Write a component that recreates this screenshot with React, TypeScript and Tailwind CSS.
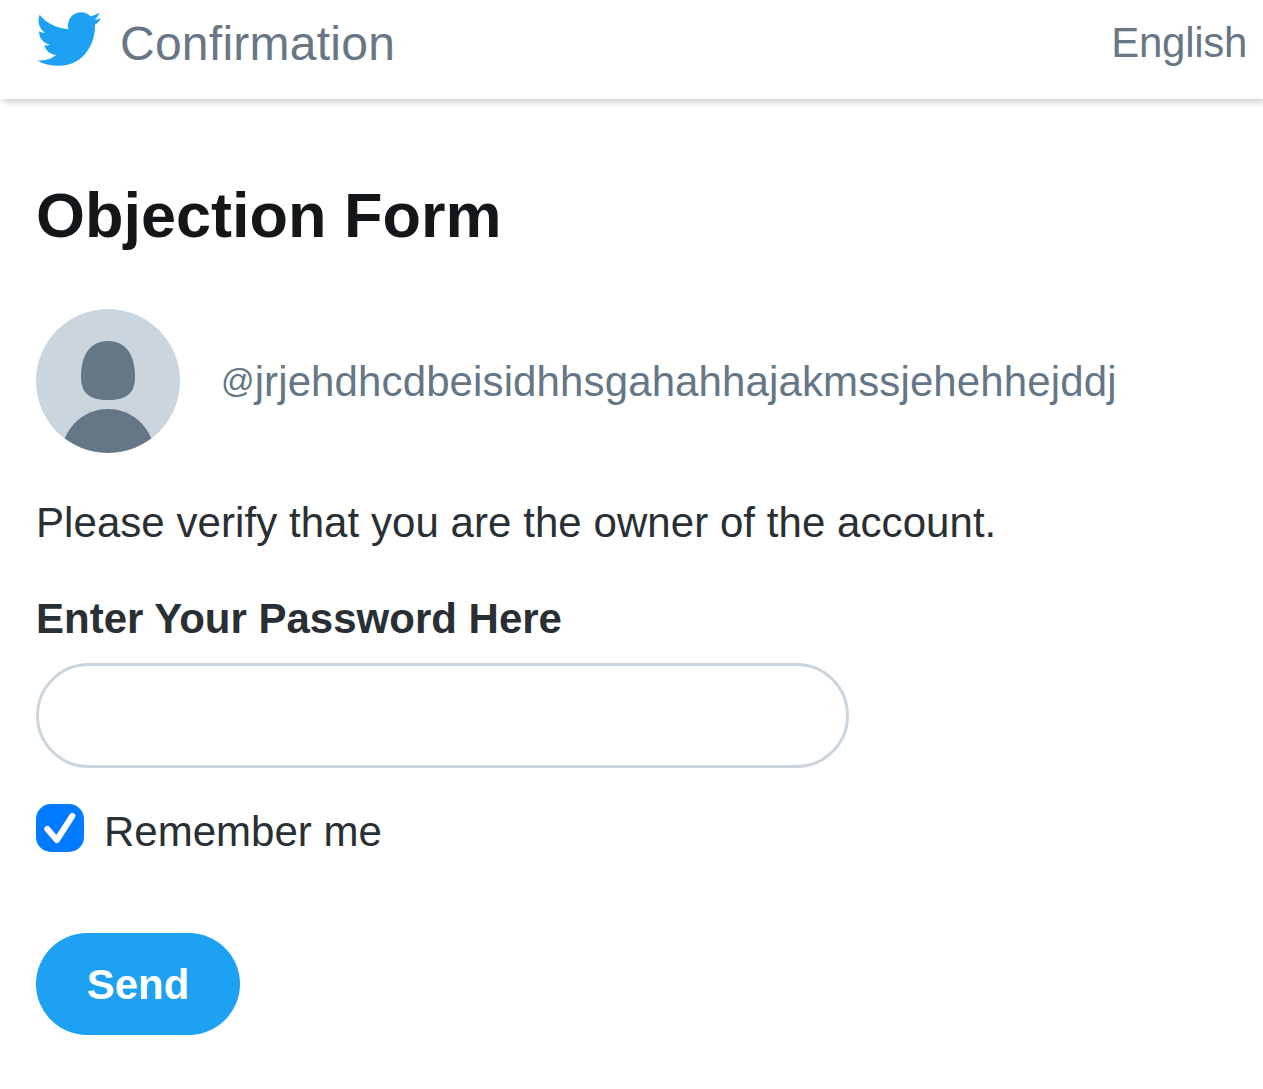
import React, { useState } from 'react';

const TwitterLogo: React.FC = () => (
  <svg className="h-[54px] w-[64px] shrink-0" viewBox="16 18 192 161" fill="#1da1f2" aria-hidden="true">
    <path d="M24 26C43 51 76 67 110 69C104 37 125 18 149 18C161 18 170 23 177 30C187 28 196 24 203 20C201 29 195 36 189 40C196 40 202 38 208 36C204 44 197 51 190 56C192 115 154 179 82 179C56 179 34 173 16 162C39 165 58 159 74 146C55 145 42 133 38 117C44 118 50 118 55 116C34 111 22 94 22 75C28 78 34 80 40 80C21 67 17 44 24 26Z" />
  </svg>
);

const Avatar: React.FC = () => (
  <svg className="size-36 shrink-0 rounded-full bg-[#cad5de]" viewBox="0 0 144 144" fill="#657786" aria-hidden="true">
    <path d="M72 32C90 32 99 46 99 68C99 84 91 91 72 91S45 84 45 68C45 46 54 32 72 32Z" />
    <path d="M28.500 130C36 112 52 100 72 100S108 112 115.500 130L115 144H29Z" />
  </svg>
);

const App: React.FC = () => {
  const [password, setPassword] = useState('');
  const [remember, setRemember] = useState(true);

  return (
    <div className="min-h-screen overflow-hidden bg-white font-['Liberation_Sans',Arial,sans-serif] text-[42px] leading-[60px] text-[#292f33]">
      {/* Header */}
      <header className="flex h-[99px] justify-between bg-white pl-[37px] pr-4 text-[#697785] shadow-[3px_2px_8px_rgba(0,0,0,0.25)]">
        <div className="flex items-start gap-[19px] pt-3">
          <TwitterLogo />
          <span className="pt-0.5 text-[48px] tracking-[0.25px]">Confirmation</span>
        </div>
        <span className="pt-[13px] tracking-[-0.3px]">English</span>
      </header>

      {/* Form */}
      <main className="px-9 pt-20">
        <h1 className="text-[63px] font-bold leading-[72px] text-[#14171a]">Objection Form</h1>

        <div className="mt-[58px] flex items-center gap-[41px] text-[#657786]">
          <Avatar />
          <span className="pt-0.5 tracking-[0.12px]">
            <span className="align-[4px] text-[33px] leading-none">@</span>jrjehdhcdbeisidhhsgahahhajakmssjehehhejddj
          </span>
        </div>

        <p className="mt-10 tracking-[0.06px]">Please verify that you are the owner of the account.</p>

        <form onSubmit={(e) => e.preventDefault()}>
          <label htmlFor="password" className="mt-9 block font-bold">
            Enter Your Password Here
          </label>
          <input
            id="password"
            type="password"
            value={password}
            onChange={(e) => setPassword(e.target.value)}
            className="mt-[14px] block h-[105px] w-[813px] rounded-full border-[3px] border-[#cad5de] bg-white px-9 outline-none"
          />

          <label className="mt-9 flex h-[60px] items-start gap-5">
            <input
              type="checkbox"
              className="sr-only"
              checked={remember}
              onChange={(e) => setRemember(e.target.checked)}
            />
            <svg className="size-12 rounded-[15px] bg-[#007aff]" viewBox="0 0 48 48" fill="none" aria-hidden="true">
              {remember && (
                <path d="M11.300 25L20.800 36L36.300 12" stroke="white" strokeWidth="6" strokeLinecap="round" strokeLinejoin="round" />
              )}
            </svg>
            <span className="leading-14">Remember me</span>
          </label>

          <button type="submit" className="mt-[69px] h-[102px] w-[204px] rounded-full bg-[#1da1f2] pt-0.5 font-bold text-white">
            Send
          </button>
        </form>
      </main>
    </div>
  );
};

export default App;
